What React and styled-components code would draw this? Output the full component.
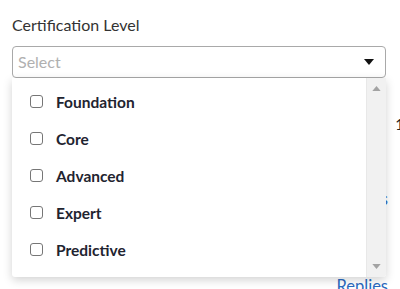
import styled, { createGlobalStyle } from 'styled-components';

const GlobalStyle = createGlobalStyle`
  html, body {
    margin: 0;
    padding: 0;
    background: #fff;
    font-family: Lato, "Liberation Sans", sans-serif;
    overflow: hidden;
  }
`;

const options = ['Foundation', 'Core', 'Advanced', 'Expert', 'Predictive'];

function App() {
  return (
    <Page>
      <GlobalStyle />
      <Field>
        <Label>Certification Level</Label>
        <SelectBox>
          <Placeholder>Select</Placeholder>
          <Caret viewBox="0 0 10 6">
            <path d="M0 0h10L5 6z" fill="#111" />
          </Caret>
        </SelectBox>
        <Menu>
          <OptionList>
            {options.map((opt) => (
              <Option key={opt}>
                <Box />
                <span>{opt}</span>
              </Option>
            ))}
          </OptionList>
          <ScrollTrack>
            <Arrow viewBox="0 0 10 6">
              <path d="M0 6h10L5 0z" fill="#a3a3a3" />
            </Arrow>
            <Arrow viewBox="0 0 10 6">
              <path d="M0 0h10L5 6z" fill="#a3a3a3" />
            </Arrow>
          </ScrollTrack>
        </Menu>
      </Field>
      <Content>
        <Count>1</Count>
        <LinkRow>
          <Link>Replies</Link>
        </LinkRow>
        <Divider />
        <LinkRow $bottom>
          <Link>Replies</Link>
        </LinkRow>
      </Content>
    </Page>
  );
}

const Page = styled.div`
  width: 400px;
  height: 289px;
  position: relative;
  overflow: hidden;
`;

const Field = styled.div`
  position: relative;
  padding: 14px 14px 0 12px;
  display: flex;
  flex-direction: column;
  z-index: 2;
`;

const Label = styled.div`
  font-size: 16px;
  color: #333;
  line-height: 22px;
  margin-bottom: 10px;
`;

const SelectBox = styled.div`
  height: 30px;
  border: 1px solid #a9a9a9;
  border-radius: 4px;
  display: flex;
  align-items: center;
  justify-content: space-between;
  padding: 0 11px 0 5px;
`;

const Placeholder = styled.span`
  font-size: 16px;
  color: #b0b0b0;
  margin-top: -2px;
`;

const Caret = styled.svg`
  width: 10px;
  height: 6px;
`;

const Menu = styled.div`
  position: absolute;
  top: 78px;
  left: 12px;
  width: 374px;
  height: 199px;
  background: #fff;
  display: flex;
  border-radius: 0 0 3px 3px;
  overflow: hidden;
  box-shadow: 0 3px 10px rgba(0, 0, 0, 0.18);
`;

const OptionList = styled.ul`
  flex: 1;
  list-style: none;
  margin: 0;
  padding: 5px 0 0 18px;
`;

const Option = styled.li`
  height: 37px;
  display: flex;
  align-items: center;
  gap: 13px;
  font-size: 15.5px;
  font-weight: 700;
  color: #1f2430;
`;

const Box = styled.span`
  width: 11px;
  height: 11px;
  border: 1.5px solid #767676;
  border-radius: 3px;
  flex-shrink: 0;
`;

const ScrollTrack = styled.div`
  width: 19px;
  background: #f1f1f1;
  border-left: 1px solid #e8e8e8;
  display: flex;
  flex-direction: column;
  justify-content: space-between;
  align-items: center;
  padding: 8px 0;
`;

const Arrow = styled.svg`
  width: 9px;
  height: 5px;
`;

const Content = styled.div`
  position: absolute;
  top: 0;
  left: 0;
  right: 0;
  bottom: 0;
  z-index: 1;
  display: flex;
  flex-direction: column;
`;

const Count = styled.div`
  margin-top: 115px;
  align-self: flex-end;
  margin-right: -4px;
  font-size: 15px;
  color: #222;
`;

const LinkRow = styled.div`
  display: flex;
  justify-content: flex-end;
  padding-right: 12px;
  margin-top: ${(p) => (p.$bottom ? '50px' : '56px')};
`;

const Link = styled.a`
  font-size: 16.5px;
  color: #2a6ac0;
`;

const Divider = styled.div`
  height: 1px;
  background: #e3e3e3;
  margin-top: 17px;
`;

export default App;
